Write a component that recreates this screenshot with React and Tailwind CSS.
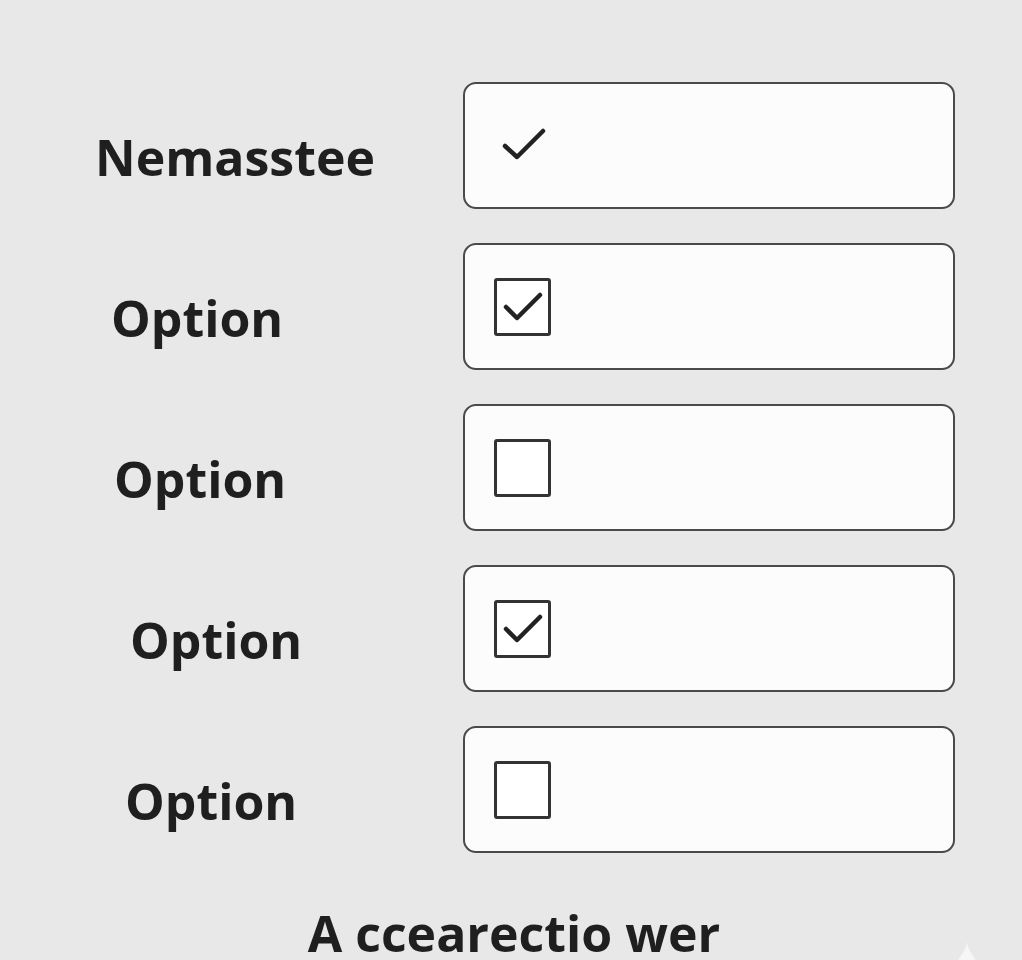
import React from "react";

function Check({ className }) {
  return (
    <svg viewBox="0 0 44 34" className={className} fill="none" stroke="#222" strokeWidth="4.5" strokeLinecap="round" strokeLinejoin="round">
      <path d="M3 19 L15 30 L41 4" />
    </svg>
  );
}

function CheckBox({ checked }) {
  return (
    <div className="w-[57px] h-[58px] border-[3px] border-[#333] rounded-[3px] flex items-center justify-center bg-white">
      {checked && (
        <svg viewBox="0 0 40 31" className="w-[40px] h-[31px]" fill="none" stroke="#222" strokeWidth="4.5" strokeLinecap="round" strokeLinejoin="round">
          <path d="M3 16 L14 27 L37 4" />
        </svg>
      )}
    </div>
  );
}

const rows = [
  { label: "Nemasstee", pad: "pl-[95px]", kind: "check" },
  { label: "Option", pad: "pl-[111px]", kind: "checked" },
  { label: "Option", pad: "pl-[114px]", kind: "empty" },
  { label: "Option", pad: "pl-[130px]", kind: "checked" },
  { label: "Option", pad: "pl-[125px]", kind: "empty" },
];

export default function App() {
  return (
    <div
      className="relative w-[1022px] h-[960px] overflow-hidden bg-[#e8e8e8] text-[#1f1f1f]"
      style={{ fontFamily: '"Open Sans", "Noto Sans", sans-serif' }}
    >
      <div className="pt-[82px] flex flex-col gap-[34px]">
        {rows.map((r, i) => (
          <div key={i} className="flex items-start">
            <div className={`w-[463px] ${r.pad} pt-[50px]`}>
              <div className="text-[50px] font-bold leading-none">{r.label}</div>
            </div>
            <div className="w-[492px] h-[127px] border-2 border-[#4a4a4a] rounded-[13px] bg-[#fcfcfc] flex items-center pl-[29px]">
              {r.kind === "check" && <Check className="w-[44px] h-[34px] ml-[8px] -mt-[4px]" />}
              {r.kind === "checked" && <CheckBox checked />}
              {r.kind === "empty" && <CheckBox />}
            </div>
          </div>
        ))}
      </div>
      <div className="mt-[60px] text-center pl-[6px]">
        <div className="text-[50px] font-bold leading-[40px]">A ccearectio wer</div>
      </div>
      <svg className="absolute left-[958px] top-[942px] w-[18px] h-[18px]" viewBox="0 0 18 18">
        <path d="M9 0 C10 6 12 10 18 18 L0 18 C6 10 8 6 9 0 Z" fill="#f6f6f6" />
      </svg>
    </div>
  );
}
